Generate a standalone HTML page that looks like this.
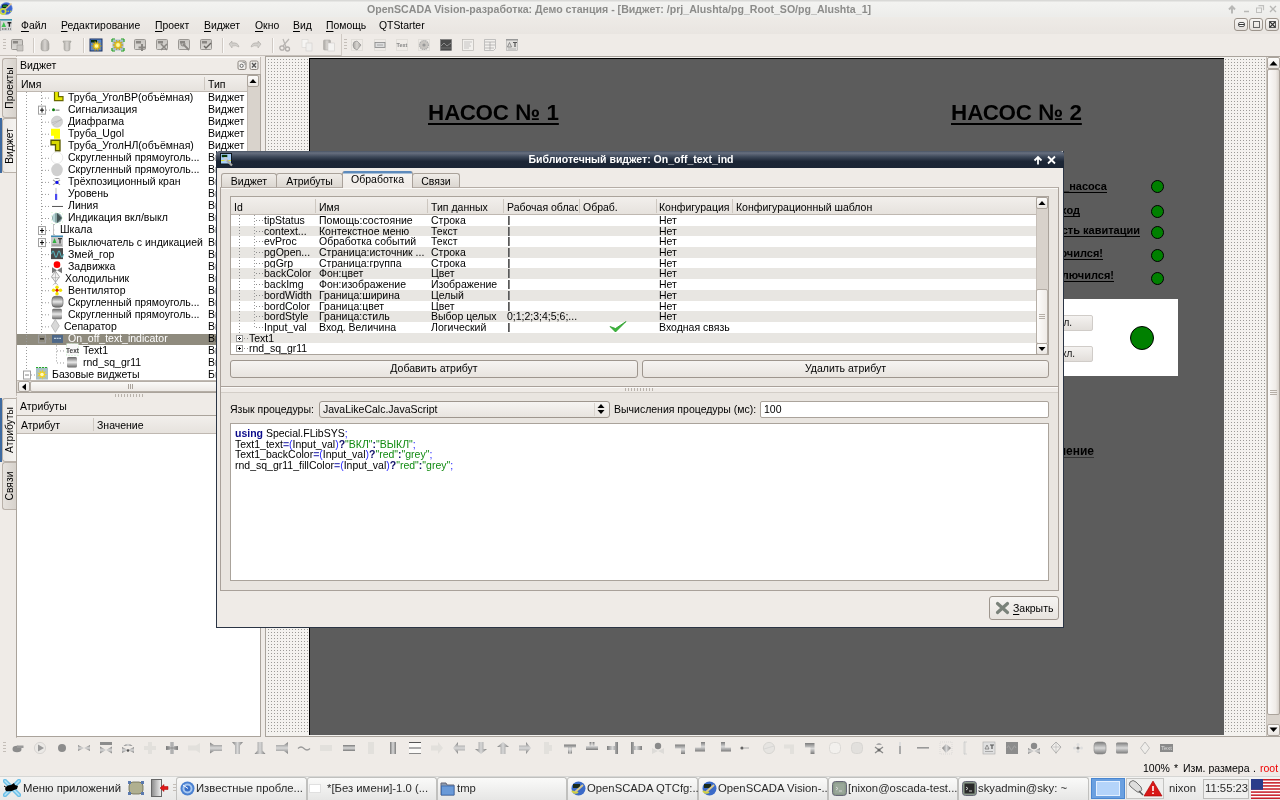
<!DOCTYPE html><html><head><meta charset="utf-8"><style>
html,body{margin:0;padding:0;width:1280px;height:800px;overflow:hidden;background:#efebe7;}
body{position:relative;will-change:transform;font-family:"Liberation Sans",sans-serif;font-size:10.5px;color:#000;}
div{position:absolute;box-sizing:border-box;}
.t{white-space:nowrap;}
.u{text-decoration:underline;text-decoration-skip-ink:none;text-underline-offset:2px;text-decoration-thickness:1px;}
.hdr{background:linear-gradient(#f3f1ee,#e9e5e0);}
.btn{background:linear-gradient(#f6f4f2,#e8e4df);border:1px solid #9e968e;border-radius:3px;}
</style></head><body>
<div style="left:0px;top:0px;width:1280px;height:17px;background:linear-gradient(#d9d9d7 0,#d9d9d7 1px,#f3f3f1 2px,#ededeb 16px);"></div>
<svg style="position:absolute;left:0;top:1px" width="14" height="15"><circle cx="6.3" cy="7.5" r="6" fill="#3a66d0"/><circle cx="6.3" cy="7.5" r="6" fill="none" stroke="#6a8ae0" stroke-width="0.6"/><rect x="2.2" y="3.6" width="5.6" height="3.4" rx="1" fill="#0a1a0a"/><rect x="3" y="4.3" width="4" height="1.8" fill="#1a8a2a"/><path d="M11.5 2.5L5 8.5" stroke="#e0c090" stroke-width="1.5"/><circle cx="3" cy="10.5" r="2.6" fill="none" stroke="#c8d840" stroke-width="1.6"/><path d="M5 10.3h7" stroke="#e0e020" stroke-width="1.1" stroke-dasharray="1.5 1"/></svg>
<div class="t" style="left:0px;top:3px;height:13px;line-height:13px;width:1238px;text-align:center;font-weight:bold;color:#8c8c8a;font-size:10.6px;">OpenSCADA Vision-разработка: Демо станция - [Виджет: /prj_Alushta/pg_Root_SO/pg_Alushta_1]</div>
<svg style="position:absolute;left:1226px;top:3px" width="54" height="12"><path d="M6 10.5V4M3 6.5l3-3 3 3" stroke="#b8b8b6" stroke-width="2" fill="none"/><path d="M18 8.5h5" stroke="#b8b8b6" stroke-width="1.5"/><rect x="30.5" y="5" width="5" height="4.5" stroke="#c0c0be" fill="none"/><path d="M32.5 2.7h5v4.5" stroke="#c0c0be" fill="none" stroke-width="1.2"/><path d="M44 3l6 6M50 3l-6 6" stroke="#b8b8b6" stroke-width="1.3"/></svg>
<div style="left:0px;top:17px;width:1280px;height:17px;background:linear-gradient(#eeebe7,#e9e5e1);"></div>
<svg style="position:absolute;left:0;top:19px" width="12" height="12"><rect x="0" y="0" width="12" height="12" fill="#d8d8d8"/><rect x="0" y="0" width="12" height="1.6" fill="#3a98b0"/><rect x="0" y="1.6" width="1" height="10.4" fill="#aaa"/><path d="M1.5 8L3.8 3 6 8z" fill="#3ec050"/><path d="M7.5 3.8h3.8M9.4 3.8v4" stroke="#222" stroke-width="1.4"/><path d="M2 10h1.5M4.5 10h2M8 10h1M10 10h1" stroke="#333" stroke-width="0.9"/></svg>
<div class="t" style="left:21px;top:19px;height:13px;line-height:13px;font-size:10.4px;"><span class="u">Ф</span>айл</div>
<div class="t" style="left:61px;top:19px;height:13px;line-height:13px;font-size:10.4px;"><span class="u">Р</span>едактирование</div>
<div class="t" style="left:155px;top:19px;height:13px;line-height:13px;font-size:10.4px;"><span class="u">П</span>роект</div>
<div class="t" style="left:204px;top:19px;height:13px;line-height:13px;font-size:10.4px;"><span class="u">В</span>иджет</div>
<div class="t" style="left:255px;top:19px;height:13px;line-height:13px;font-size:10.4px;"><span class="u">О</span>кно</div>
<div class="t" style="left:293px;top:19px;height:13px;line-height:13px;font-size:10.4px;"><span class="u">В</span>ид</div>
<div class="t" style="left:326px;top:19px;height:13px;line-height:13px;font-size:10.4px;"><span class="u">П</span>омощь</div>
<div class="t" style="left:379px;top:19px;height:13px;line-height:13px;font-size:10.4px;">QTStarter</div>
<div style="left:1234px;top:18px;width:14px;height:13px;border:1px solid #9c948c;border-radius:3px;background:linear-gradient(#f8f6f4,#e4e0dc);"></div>
<div style="left:1249px;top:18px;width:14px;height:13px;border:1px solid #9c948c;border-radius:3px;background:linear-gradient(#f8f6f4,#e4e0dc);"></div>
<div style="left:1265px;top:18px;width:14px;height:13px;border:1px solid #9c948c;border-radius:3px;background:linear-gradient(#f8f6f4,#e4e0dc);"></div>
<div style="left:1238px;top:22px;width:7px;height:5px;border:1px solid #555;border-radius:2px;background:#fff;"></div>
<div style="left:1239px;top:24px;width:5px;height:1px;background:#333;"></div>
<div style="left:1253px;top:21px;width:7px;height:7px;border:1px solid #666;"></div>
<div style="left:1269px;top:21px;width:7px;height:7px;border:1px solid #555;"></div>
<svg style="position:absolute;left:1269px;top:21px" width="7" height="7"><path d="M1 1l5 5M6 1l-5 5" stroke="#333" stroke-width="1.2"/></svg>
<div style="left:0px;top:34px;width:1280px;height:22px;background:#efebe7;"></div>
<div style="left:3px;top:39px;width:3px;height:1px;background:#c4beb8;"></div>
<div style="left:3px;top:42px;width:3px;height:1px;background:#c4beb8;"></div>
<div style="left:3px;top:45px;width:3px;height:1px;background:#c4beb8;"></div>
<div style="left:3px;top:48px;width:3px;height:1px;background:#c4beb8;"></div>
<svg style="position:absolute;left:0;top:34px" width="560" height="22"><defs><linearGradient id="tg" x1="0" y1="0" x2="0" y2="1"><stop offset="0" stop-color="#c8c5c1"/><stop offset="1" stop-color="#dcdad6"/></linearGradient><linearGradient id="tgh" x1="0" y1="0" x2="1" y2="0"><stop offset="0" stop-color="#a8a5a1"/><stop offset=".5" stop-color="#d8d5d1"/><stop offset="1" stop-color="#a4a19d"/></linearGradient></defs><g transform="translate(11,5)"><rect x="0.5" y="0.5" width="11" height="10" rx="1" fill="url(#tg)" stroke="#9a9793"/><rect x="2" y="2" width="5" height="2.5" fill="#8a8783"/><path d="M6 6h6v6H6z" fill="#c8c5c1" stroke="#9a9793" stroke-width="0.6"/></g><g transform="translate(39,5)"><path d="M2 5Q2 1 6 0 10 1 10 5v5q0 2-4 2t-4-2z" fill="url(#tgh)" stroke="#aaa7a3" stroke-width="0.6"/></g><g transform="translate(61,5)"><path d="M2 2h8v1l-1 1v6q0 2-3 2t-3-2V4L2 3z" fill="url(#tgh)" stroke="#aaa7a3" stroke-width="0.6"/></g><g transform="translate(90,5)"><rect x="0" y="0" width="12" height="12" fill="#5a8ad0" stroke="#1a3060"/><rect x="1" y="1" width="6" height="2.5" fill="#0a3010"/><polygon points="11.50,7.00 8.97,7.80 10.55,9.94 8.03,9.10 8.05,11.76 6.50,9.60 4.95,11.76 4.97,9.10 2.45,9.94 4.03,7.80 1.50,7.00 4.03,6.20 2.45,4.06 4.97,4.90 4.95,2.24 6.50,4.40 8.05,2.24 8.03,4.90 10.55,4.06 8.97,6.20" fill="#f0d020" stroke="#c09000" stroke-width="0.5"/><circle cx="6.5" cy="7" r="1.82" fill="#fff8a0"/></g><g transform="translate(112,5)"><rect x="0.5" y="0.5" width="11" height="11" fill="#a8c0d0"/><path d="M0 0h3M0 0v3M12 0h-3M12 0v3M0 12h3M0 12v-3M12 12h-3M12 12v-3" stroke="#20a020" stroke-width="1.2"/><polygon points="11.20,6.00 8.57,6.83 10.21,9.06 7.59,8.18 7.61,10.95 6.00,8.70 4.39,10.95 4.41,8.18 1.79,9.06 3.43,6.83 0.80,6.00 3.43,5.17 1.79,2.94 4.41,3.82 4.39,1.05 6.00,3.30 7.61,1.05 7.59,3.82 10.21,2.94 8.57,5.17" fill="#f0d020" stroke="#c09000" stroke-width="0.5"/><circle cx="6" cy="6" r="1.89" fill="#fff8a0"/></g><g transform="translate(134,5)"><rect x="0.5" y="0.5" width="11" height="10" rx="1" fill="url(#tg)" stroke="#9a9793"/><rect x="2" y="2" width="5" height="2.5" fill="#8a8783"/><path d="M8 5v7M4.5 8.5h7" stroke="#8a8783" stroke-width="2"/></g><g transform="translate(156,5)"><rect x="0.5" y="0.5" width="11" height="10" rx="1" fill="url(#tg)" stroke="#9a9793"/><rect x="2" y="2" width="5" height="2.5" fill="#8a8783"/><path d="M5 5l6 6M11 5l-6 6" stroke="#8a8783" stroke-width="1.6"/></g><g transform="translate(178,5)"><rect x="0.5" y="0.5" width="11" height="10" rx="1" fill="url(#tg)" stroke="#9a9793"/><rect x="2" y="2" width="5" height="2.5" fill="#8a8783"/><path d="M5 5l6 6" stroke="#8a8783" stroke-width="1.8"/><circle cx="5" cy="5" r="2" fill="none" stroke="#8a8783"/></g><g transform="translate(200,5)"><rect x="0.5" y="0.5" width="11" height="10" rx="1" fill="url(#tg)" stroke="#9a9793"/><rect x="2" y="2" width="5" height="2.5" fill="#8a8783"/><path d="M4 7l2 2 5-5" stroke="#6a6763" stroke-width="1.4" fill="none"/></g><g transform="translate(228,5)"><path d="M1 5l3-3v2q6-1 7 4-3-2-7-1v2z" fill="url(#tg)" stroke="#a4a19d" stroke-width="0.5"/></g><g transform="translate(250,5)"><path d="M11 5l-3-3v2q-6-1-7 4 3-2 7-1v2z" fill="url(#tg)" stroke="#a4a19d" stroke-width="0.5"/></g><g transform="translate(279,5)"><circle cx="3" cy="9" r="2.2" fill="none" stroke="#b0adaa" stroke-width="1.3"/><circle cx="8.5" cy="10" r="2" fill="none" stroke="#b0adaa" stroke-width="1.3"/><path d="M4 7l6-7M7 8L4 0" stroke="#b8b5b2" stroke-width="1.2"/></g><g transform="translate(301,5)"><rect x="1" y="0.5" width="6" height="8" fill="#f6f5f3" stroke="#d8d6d3" stroke-width="0.6"/><rect x="5" y="4" width="6" height="8" fill="#f0efed" stroke="#d0cecb" stroke-width="0.6"/></g><g transform="translate(323,5)"><rect x="0.5" y="1" width="7" height="10" rx="1" fill="url(#tgh)" stroke="#b0adaa" stroke-width="0.6"/><rect x="5" y="4" width="6.5" height="8" fill="#f4f3f1" stroke="#d0cecb" stroke-width="0.6"/></g><g transform="translate(351,5)"><rect x="0.5" y="0.5" width="11" height="11" fill="none" stroke="#c8c5c1" stroke-dasharray="1 1" stroke-width="0.7"/><path d="M2 6q0-4 4-4l4 4-4 5q-4-1-4-5z" fill="url(#tgh)" stroke="#888" stroke-width="0.6"/></g><g transform="translate(374,5)"><rect x="0.5" y="0.5" width="11" height="11" fill="none" stroke="#c8c5c1" stroke-dasharray="1 1" stroke-width="0.7"/><rect x="1" y="3.5" width="10" height="5" fill="#ddd" stroke="#888" stroke-width="0.8"/><path d="M3 6h6" stroke="#999" stroke-width="0.8"/></g><g transform="translate(396,5)"><rect x="0.5" y="0.5" width="11" height="11" fill="none" stroke="#c8c5c1" stroke-dasharray="1 1" stroke-width="0.7"/><text x="6" y="8" font-size="5.5" text-anchor="middle" fill="#888" font-family="Liberation Sans" font-weight="bold">Text</text></g><g transform="translate(418,5)"><rect x="0.5" y="0.5" width="11" height="11" fill="none" stroke="#c8c5c1" stroke-dasharray="1 1" stroke-width="0.7"/><circle cx="6" cy="6" r="4.5" fill="#c8c5c1" stroke="#aaa" stroke-width="1.2" stroke-dasharray="1.2 0.8"/><circle cx="6" cy="6" r="1.6" fill="#999"/></g><g transform="translate(440,5)"><rect x="0.5" y="0.5" width="11" height="11" fill="#4a4a4a" stroke="#777" stroke-width="0.6"/><path d="M1 7l3-3 3 3 4-3" stroke="#999" fill="none" stroke-width="0.8"/><path d="M1 9h10" stroke="#888" stroke-width="0.6"/></g><g transform="translate(462,5)"><rect x="0.5" y="0.5" width="11" height="11" fill="#f2f0ed" stroke="#b8b5b1" stroke-width="0.7"/><path d="M2 3h8M2 5h6M2 7h7M2 9h5" stroke="#aaa" stroke-width="0.6"/></g><g transform="translate(484,5)"><path d="M0.5 0.5h11v9l-2 2h-9z" fill="#f2f0ed" stroke="#aaa" stroke-width="0.7"/><path d="M1 3h10M1 6h10M1 9h9M6 3v8" stroke="#999" stroke-width="0.6"/></g><g transform="translate(506,5)"><rect x="0.5" y="0.5" width="11" height="11" fill="#e2e0dd" stroke="#aaa" stroke-width="0.6"/><rect x="0" y="0" width="12" height="1.5" fill="#999"/><path d="M1.5 8L3.5 3.5 5.5 8z" fill="none" stroke="#777" stroke-width="0.8"/><path d="M7 3.5h4M9 3.5v4.5" stroke="#555" stroke-width="1.2"/><path d="M2 10h8" stroke="#aaa" stroke-width="0.8"/></g></svg>
<div style="left:33px;top:38px;width:1px;height:15px;background:#d0cac4;"></div>
<div style="left:34px;top:38px;width:1px;height:15px;background:#fbfaf9;"></div>
<div style="left:83px;top:38px;width:1px;height:15px;background:#d0cac4;"></div>
<div style="left:84px;top:38px;width:1px;height:15px;background:#fbfaf9;"></div>
<div style="left:222px;top:38px;width:1px;height:15px;background:#d0cac4;"></div>
<div style="left:223px;top:38px;width:1px;height:15px;background:#fbfaf9;"></div>
<div style="left:272px;top:38px;width:1px;height:15px;background:#d0cac4;"></div>
<div style="left:273px;top:38px;width:1px;height:15px;background:#fbfaf9;"></div>
<div style="left:341px;top:34px;width:1px;height:22px;background:#d0cac4;"></div>
<div style="left:0px;top:55px;width:341px;height:1px;background:#c6c0ba;"></div>
<div style="left:344px;top:39px;width:3px;height:1px;background:#c4beb8;"></div>
<div style="left:344px;top:42px;width:3px;height:1px;background:#c4beb8;"></div>
<div style="left:344px;top:45px;width:3px;height:1px;background:#c4beb8;"></div>
<div style="left:344px;top:48px;width:3px;height:1px;background:#c4beb8;"></div>
<div style="left:2px;top:58px;width:15px;height:60px;background:linear-gradient(90deg,#e6e2dd,#d6d1cb);border:1px solid #b9b1a9;border-right:none;border-radius:3px 0 0 3px;"></div>
<div class="t" style="left:3px;top:58px;width:13px;height:60px;"><div class="t" style="left:50%;top:50%;transform:translate(-50%,-50%) rotate(-90deg);font-size:10.3px;line-height:12px;">Проекты</div></div>
<div style="left:2px;top:118px;width:15px;height:55px;background:linear-gradient(90deg,#ece9e5,#f6f4f1);border:1px solid #b9b1a9;border-right:none;border-radius:3px 0 0 3px;"></div>
<div style="left:0px;top:118px;width:2px;height:55px;background:#3e6aa0;"></div>
<div class="t" style="left:3px;top:118px;width:13px;height:55px;"><div class="t" style="left:50%;top:50%;transform:translate(-50%,-50%) rotate(-90deg);font-size:10.3px;line-height:12px;">Виджет</div></div>
<div style="left:2px;top:398px;width:15px;height:64px;background:linear-gradient(90deg,#ece9e5,#f6f4f1);border:1px solid #b9b1a9;border-right:none;border-radius:3px 0 0 3px;"></div>
<div style="left:0px;top:398px;width:2px;height:64px;background:#3e6aa0;"></div>
<div class="t" style="left:3px;top:398px;width:13px;height:64px;"><div class="t" style="left:50%;top:50%;transform:translate(-50%,-50%) rotate(-90deg);font-size:10.3px;line-height:12px;">Атрибуты</div></div>
<div style="left:2px;top:462px;width:15px;height:48px;background:linear-gradient(90deg,#e6e2dd,#d6d1cb);border:1px solid #b9b1a9;border-right:none;border-radius:3px 0 0 3px;"></div>
<div class="t" style="left:3px;top:462px;width:13px;height:48px;"><div class="t" style="left:50%;top:50%;transform:translate(-50%,-50%) rotate(-90deg);font-size:10.3px;line-height:12px;">Связи</div></div>
<div style="left:16px;top:56px;width:1px;height:340px;background:#c4bdb6;"></div>
<div style="left:16px;top:397px;width:1px;height:341px;background:#c4bdb6;"></div>
<div class="t" style="left:20px;top:59px;height:13px;line-height:13px;">Виджет</div>
<svg style="position:absolute;left:237px;top:60px" width="23" height="11"><rect x="1" y="1" width="8" height="8.5" rx="1.5" fill="#f0eeeb" stroke="#8a847e"/><circle cx="4.6" cy="5.8" r="1.6" fill="#fff" stroke="#666" stroke-width="1"/><path d="M5.5 2.5h2.5v2.5" stroke="#888" fill="none" stroke-width="0.8"/><rect x="13" y="1" width="8" height="8.5" rx="1.5" fill="#f0eeeb" stroke="#8a847e"/><path d="M15 3l4 4.5M19 3l-4 4.5" stroke="#555" stroke-width="1.3"/></svg>
<div style="left:16px;top:57px;width:245px;height:1px;background:#fbfaf9;"></div>
<div style="left:260px;top:57px;width:1px;height:337px;background:#c4bdb6;"></div>
<div style="left:16px;top:74px;width:245px;height:319px;background:#fff;border:1px solid #aaa39b;"></div>
<div style="left:17px;top:75px;width:230px;height:17px;background:linear-gradient(#f2efec,#e6e2dd);border-bottom:1px solid #bfb8b1;"></div>
<div style="left:204px;top:77px;width:1px;height:13px;background:#cdc7c0;"></div>
<div class="t" style="left:21px;top:78px;height:12px;line-height:12px;">Имя</div>
<div class="t" style="left:208px;top:78px;height:12px;line-height:12px;">Тип</div>
<div style="left:247px;top:75px;width:13px;height:306px;background:#d9d3cc;border-left:1px solid #c0b9b2;"></div>
<div style="left:247px;top:75px;width:12px;height:12px;background:linear-gradient(#fdfcfb,#eae6e2);border:1px solid #aaa39b;border-radius:2px;"></div>
<svg style="position:absolute;left:249px;top:78px" width="8" height="6"><path d="M0.5 5L4 1l3.5 4z" fill="#000"/></svg>
<div style="left:17px;top:380px;width:230px;height:12px;background:#e0dbd5;border-top:1px solid #c0b9b2;"></div>
<div style="left:18px;top:381px;width:12px;height:11px;background:linear-gradient(#fdfcfb,#eae6e2);border:1px solid #aaa39b;border-radius:2px;"></div>
<svg style="position:absolute;left:21px;top:383px" width="6" height="8"><path d="M5 0.5L1 4l4 3.5z" fill="#000"/></svg>
<div style="left:30px;top:381px;width:217px;height:11px;background:linear-gradient(#fbfaf8,#ece8e4);border:1px solid #b5aea6;border-radius:2px;"></div>
<div style="left:128px;top:384px;width:1px;height:5px;background:#aaa39b;"></div>
<div style="left:130px;top:384px;width:1px;height:5px;background:#aaa39b;"></div>
<div style="left:132px;top:384px;width:1px;height:5px;background:#aaa39b;"></div>
<div style="left:115px;top:394px;width:1px;height:3px;background:#b8b2ab;"></div>
<div style="left:118px;top:394px;width:1px;height:3px;background:#b8b2ab;"></div>
<div style="left:121px;top:394px;width:1px;height:3px;background:#b8b2ab;"></div>
<div style="left:124px;top:394px;width:1px;height:3px;background:#b8b2ab;"></div>
<div style="left:127px;top:394px;width:1px;height:3px;background:#b8b2ab;"></div>
<div style="left:130px;top:394px;width:1px;height:3px;background:#b8b2ab;"></div>
<div style="left:133px;top:394px;width:1px;height:3px;background:#b8b2ab;"></div>
<div style="left:136px;top:394px;width:1px;height:3px;background:#b8b2ab;"></div>
<div style="left:139px;top:394px;width:1px;height:3px;background:#b8b2ab;"></div>
<div style="left:142px;top:394px;width:1px;height:3px;background:#b8b2ab;"></div>
<div style="left:17px;top:334px;width:230px;height:11px;background:#8f8b7e;"></div>
<svg style="position:absolute;left:17px;top:92px;overflow:hidden" width="230" height="288"><defs><linearGradient id="trg" x1="0" y1="0" x2="0" y2="1"><stop offset="0" stop-color="#666"/><stop offset=".5" stop-color="#e8e8e8"/><stop offset="1" stop-color="#666"/></linearGradient><radialGradient id="trr"><stop offset="0" stop-color="#e0e0e0"/><stop offset="1" stop-color="#5a5a5a"/></radialGradient></defs><path d="M9.5 0V277.52" stroke="#9a9a9a" stroke-width="1" stroke-dasharray="1 2"/><path d="M24.5 0V242.39999999999998" stroke="#9a9a9a" stroke-width="1" stroke-dasharray="1 2"/><path d="M39.5 250.39999999999998V270.98" stroke="#9a9a9a" stroke-width="1" stroke-dasharray="1 2"/><path d="M25 6.099999999999994H33" stroke="#9a9a9a" stroke-width="1" stroke-dasharray="1 2"/><path d="M37.5 -2.4000000000000057h4v7h4.5v4h-8.5z" fill="#e8e800" stroke="#6a6a00" stroke-width="1.2"/><rect x="21.5" y="14.139999999999986" width="7" height="8" fill="#fff" stroke="#a0a0a0"/><path d="M23 18.139999999999986h4" stroke="#000"/><path d="M25 15.639999999999986v5" stroke="#000"/><path d="M29 18.139999999999986H33" stroke="#9a9a9a" stroke-width="1" stroke-dasharray="1 2"/><circle cx="36.5" cy="17.639999999999986" r="1.5" fill="#108010"/><path d="M38.5 18.139999999999986h4" stroke="#777"/><path d="M25 30.179999999999993H33" stroke="#9a9a9a" stroke-width="1" stroke-dasharray="1 2"/><circle cx="40" cy="29.679999999999993" r="5.6" fill="#d4d4d4" stroke="#c4c4c4" stroke-width="0.6"/><path d="M35 30.679999999999993l10-3M36 32.67999999999999l8-5" stroke="#aaa" stroke-width="0.5"/><path d="M25 42.22H33" stroke="#9a9a9a" stroke-width="1" stroke-dasharray="1 2"/><path d="M34 36.72h9v10h-6v-3h-3z" fill="#ffff00"/><path d="M25 54.25999999999999H33" stroke="#9a9a9a" stroke-width="1" stroke-dasharray="1 2"/><path d="M34 48.25999999999999h9v10.5h-4.5v-6h-4.5z" fill="#d8d800" stroke="#5a5a00" stroke-width="1.3"/><path d="M25 66.29999999999998H33" stroke="#9a9a9a" stroke-width="1" stroke-dasharray="1 2"/><ellipse cx="40" cy="65.79999999999998" rx="5.8" ry="5.8" fill="#fff" stroke="#d8d8d8" stroke-width="0.6"/><path d="M25 78.33999999999997H33" stroke="#9a9a9a" stroke-width="1" stroke-dasharray="1 2"/><ellipse cx="40" cy="77.83999999999997" rx="5.8" ry="6.3" fill="#d0d0d0"/><path d="M25 90.38H33" stroke="#9a9a9a" stroke-width="1" stroke-dasharray="1 2"/><path d="M37 86.88q3-2 6 0z" fill="#999"/><path d="M36 87.88l7 5M43 87.88l-7 5" stroke="#999" stroke-width="1.2"/><circle cx="40" cy="90.38" r="1.6" fill="#1010f0"/><path d="M25 102.41999999999999H33" stroke="#9a9a9a" stroke-width="1" stroke-dasharray="1 2"/><rect x="38" y="95.91999999999999" width="2" height="12" fill="#ddd"/><rect x="38" y="101.91999999999999" width="2.2" height="6" fill="#4a4af0"/><path d="M25 114.45999999999998H33" stroke="#9a9a9a" stroke-width="1" stroke-dasharray="1 2"/><path d="M35 114.45999999999998h11" stroke="#555"/><path d="M25 126.5H33" stroke="#9a9a9a" stroke-width="1" stroke-dasharray="1 2"/><rect x="34.5" y="120.5" width="11" height="11" fill="none" stroke="#9e9" stroke-width="0.5" stroke-dasharray="1 3"/><circle cx="40" cy="126.0" r="5" fill="#8aa8a8"/><path d="M40 121.0l5 5-5 5z" fill="#455"/><path d="M37 122.0v8" stroke="#cee" stroke-width="1.3"/><rect x="21.5" y="134.54" width="7" height="8" fill="#fff" stroke="#a0a0a0"/><path d="M23 138.54h4" stroke="#000"/><path d="M25 136.04v5" stroke="#000"/><path d="M29 138.54H33" stroke="#9a9a9a" stroke-width="1" stroke-dasharray="1 2"/><path d="M36.5 132.04v11M36.5 132.54h1.5M36.5 142.54h1.5M36.5 138.04h1" stroke="#aaa" stroke-width="0.7"/><rect x="21.5" y="146.57999999999998" width="7" height="8" fill="#fff" stroke="#a0a0a0"/><path d="M23 150.57999999999998h4" stroke="#000"/><path d="M25 148.07999999999998v5" stroke="#000"/><path d="M29 150.57999999999998H33" stroke="#9a9a9a" stroke-width="1" stroke-dasharray="1 2"/><rect x="34" y="143.57999999999998" width="12" height="11.5" fill="#c8c8c8"/><rect x="34" y="143.57999999999998" width="12" height="1.3" fill="#2a80b0"/><path d="M35.5 151.07999999999998l2-5 2 5z" fill="#30b040"/><path d="M41 146.57999999999998h4M43 146.57999999999998v5" stroke="#333" stroke-width="1.2"/><path d="M35 153.07999999999998h10" stroke="#777" stroke-width="0.8"/><path d="M25 162.62H33" stroke="#9a9a9a" stroke-width="1" stroke-dasharray="1 2"/><rect x="34" y="156.12" width="12" height="11" fill="#4a4a4a"/><path d="M34.5 162.12q1.5-6 3 0t3 0 3 0 3 0" stroke="#5ab0b8" stroke-width="1.1" fill="none"/><path d="M25 174.65999999999997H33" stroke="#9a9a9a" stroke-width="1" stroke-dasharray="1 2"/><path d="M35 175.15999999999997l5 3-5 3zM45 175.15999999999997l-5 3 5 3z" fill="#777"/><circle cx="40" cy="172.65999999999997" r="3.3" fill="#f00"/><path d="M25 186.7H33" stroke="#9a9a9a" stroke-width="1" stroke-dasharray="1 2"/><path d="M38.5 179.2l4 5.5-4 5.5-4-5.5z" fill="#f2f2f2" stroke="#888" stroke-width="0.7"/><path d="M38.5 179.2v13M34.5 185.7h8" stroke="#999" stroke-width="0.5"/><path d="M36 193.2l2.5-2.5 2.5 2.5" stroke="#888" fill="none" stroke-width="0.6"/><path d="M25 198.74H33" stroke="#9a9a9a" stroke-width="1" stroke-dasharray="1 2"/><circle cx="40" cy="195.24" r="1.7" fill="#f0e000"/><circle cx="40" cy="201.74" r="1.7" fill="#f0e000"/><circle cx="36.5" cy="198.24" r="1.7" fill="#f0e000"/><circle cx="43.5" cy="198.24" r="1.7" fill="#f0e000"/><path d="M36 198.24h8M40 195.24v7" stroke="#f0e000" stroke-width="1.5"/><circle cx="40" cy="198.24" r="1.5" fill="#e01010"/><path d="M25 210.77999999999997H33" stroke="#9a9a9a" stroke-width="1" stroke-dasharray="1 2"/><rect x="35" y="204.27999999999997" width="11" height="11" rx="3.5" fill="url(#trg)" stroke="#555" stroke-width="0.6"/><path d="M25 222.81999999999994H33" stroke="#9a9a9a" stroke-width="1" stroke-dasharray="1 2"/><rect x="35" y="216.81999999999994" width="10" height="10.5" rx="1.5" fill="url(#trg)"/><path d="M25 234.86H33" stroke="#9a9a9a" stroke-width="1" stroke-dasharray="1 2"/><path d="M38.3 227.36l4 6.5-4 6.5-4-6.5z" fill="#d8d8d8" stroke="#aaa" stroke-width="0.7"/><rect x="21.5" y="242.89999999999998" width="7" height="8" fill="none" stroke="#a0a0a0"/><path d="M23 246.89999999999998h4" stroke="#000"/><path d="M29 246.89999999999998H33" stroke="#9a9a9a" stroke-width="1" stroke-dasharray="1 2"/><rect x="35" y="242.89999999999998" width="11" height="8" fill="#4e6888"/><path d="M37 246.39999999999998h7" stroke="#bcd" stroke-width="1.2" stroke-dasharray="2 0.6"/><path d="M40 258.93999999999994H47" stroke="#9a9a9a" stroke-width="1" stroke-dasharray="1 2"/><rect x="49.5" y="251.43999999999994" width="12" height="12" fill="#f8f8f8" stroke="#8d8" stroke-width="0.5" stroke-dasharray="1 2"/><text x="55.5" y="260.93999999999994" font-size="6.5" text-anchor="middle" fill="#444" font-family="Liberation Sans" font-weight="bold">Text</text><path d="M40 270.98H47" stroke="#9a9a9a" stroke-width="1" stroke-dasharray="1 2"/><rect x="50" y="264.98" width="10" height="10.5" rx="1.5" fill="url(#trg)"/><rect x="6.5" y="279.02" width="7" height="8" fill="#fff" stroke="#a0a0a0"/><path d="M8 283.02h4" stroke="#888"/><path d="M14 283.02H18" stroke="#9a9a9a" stroke-width="1" stroke-dasharray="1 2"/><rect x="19" y="275.52" width="12" height="12" fill="#a8c0c8"/><path d="M19 275.52h12" stroke="#2a2" stroke-dasharray="2 1"/><polygon points="30.30,282.52 27.44,283.41 29.06,285.93 26.30,284.77 25.92,287.74 24.55,285.08 22.35,287.11 23.01,284.19 20.02,284.33 22.40,282.52 20.02,280.71 23.01,280.85 22.35,277.93 24.55,279.96 25.92,277.30 26.30,280.27 29.06,279.11 27.44,281.63" fill="#f0d020"/><circle cx="25" cy="282.52" r="1.8" fill="#fffac0"/></svg>
<div class="t" style="left:68px;top:91px;height:13px;line-height:13px;color:#000;">Труба_УголВР(объёмная)</div>
<div class="t" style="left:208px;top:91px;height:13px;line-height:13px;">Виджет</div>
<div class="t" style="left:68px;top:103px;height:13px;line-height:13px;color:#000;">Сигнализация</div>
<div class="t" style="left:208px;top:103px;height:13px;line-height:13px;">Виджет</div>
<div class="t" style="left:68px;top:115px;height:13px;line-height:13px;color:#000;">Диафрагма</div>
<div class="t" style="left:208px;top:115px;height:13px;line-height:13px;">Виджет</div>
<div class="t" style="left:68px;top:127px;height:13px;line-height:13px;color:#000;">Труба_Ugol</div>
<div class="t" style="left:208px;top:127px;height:13px;line-height:13px;">Виджет</div>
<div class="t" style="left:68px;top:139px;height:13px;line-height:13px;color:#000;">Труба_УголНЛ(объёмная)</div>
<div class="t" style="left:208px;top:139px;height:13px;line-height:13px;">Виджет</div>
<div class="t" style="left:68px;top:151px;height:13px;line-height:13px;color:#000;">Скругленный прямоуголь...</div>
<div class="t" style="left:208px;top:151px;height:13px;line-height:13px;">Виджет</div>
<div class="t" style="left:68px;top:163px;height:13px;line-height:13px;color:#000;">Скругленный прямоуголь...</div>
<div class="t" style="left:208px;top:163px;height:13px;line-height:13px;">Виджет</div>
<div class="t" style="left:68px;top:175px;height:13px;line-height:13px;color:#000;">Трёхпозиционный кран</div>
<div class="t" style="left:208px;top:175px;height:13px;line-height:13px;">Виджет</div>
<div class="t" style="left:68px;top:187px;height:13px;line-height:13px;color:#000;">Уровень</div>
<div class="t" style="left:208px;top:187px;height:13px;line-height:13px;">Виджет</div>
<div class="t" style="left:68px;top:199px;height:13px;line-height:13px;color:#000;">Линия</div>
<div class="t" style="left:208px;top:199px;height:13px;line-height:13px;">Виджет</div>
<div class="t" style="left:68px;top:211px;height:13px;line-height:13px;color:#000;">Индикация вкл/выкл</div>
<div class="t" style="left:208px;top:211px;height:13px;line-height:13px;">Виджет</div>
<div class="t" style="left:60px;top:223px;height:13px;line-height:13px;color:#000;">Шкала</div>
<div class="t" style="left:208px;top:223px;height:13px;line-height:13px;">Виджет</div>
<div class="t" style="left:68px;top:236px;height:13px;line-height:13px;color:#000;">Выключатель с индикацией</div>
<div class="t" style="left:208px;top:236px;height:13px;line-height:13px;">Виджет</div>
<div class="t" style="left:68px;top:248px;height:13px;line-height:13px;color:#000;">Змей_гор</div>
<div class="t" style="left:208px;top:248px;height:13px;line-height:13px;">Виджет</div>
<div class="t" style="left:68px;top:260px;height:13px;line-height:13px;color:#000;">Задвижка</div>
<div class="t" style="left:208px;top:260px;height:13px;line-height:13px;">Виджет</div>
<div class="t" style="left:65px;top:272px;height:13px;line-height:13px;color:#000;">Холодильник</div>
<div class="t" style="left:208px;top:272px;height:13px;line-height:13px;">Виджет</div>
<div class="t" style="left:68px;top:284px;height:13px;line-height:13px;color:#000;">Вентилятор</div>
<div class="t" style="left:208px;top:284px;height:13px;line-height:13px;">Виджет</div>
<div class="t" style="left:68px;top:296px;height:13px;line-height:13px;color:#000;">Скругленный прямоуголь...</div>
<div class="t" style="left:208px;top:296px;height:13px;line-height:13px;">Виджет</div>
<div class="t" style="left:68px;top:308px;height:13px;line-height:13px;color:#000;">Скругленный прямоуголь...</div>
<div class="t" style="left:208px;top:308px;height:13px;line-height:13px;">Виджет</div>
<div class="t" style="left:64px;top:320px;height:13px;line-height:13px;color:#000;">Сепаратор</div>
<div class="t" style="left:208px;top:320px;height:13px;line-height:13px;">Виджет</div>
<div class="t" style="left:68px;top:332px;height:13px;line-height:13px;color:#fff;">On_off_text_indicator</div>
<div class="t" style="left:208px;top:332px;height:13px;line-height:13px;">Виджет</div>
<div class="t" style="left:83px;top:344px;height:13px;line-height:13px;color:#000;">Text1</div>
<div class="t" style="left:208px;top:344px;height:13px;line-height:13px;">Виджет</div>
<div class="t" style="left:83px;top:356px;height:13px;line-height:13px;color:#000;">rnd_sq_gr11</div>
<div class="t" style="left:208px;top:356px;height:13px;line-height:13px;">Виджет</div>
<div class="t" style="left:52px;top:368px;height:13px;line-height:13px;color:#000;">Базовые виджеты</div>
<div class="t" style="left:208px;top:368px;height:13px;line-height:13px;">Библиотека</div>
<div class="t" style="left:20px;top:400px;height:13px;line-height:13px;">Атрибуты</div>
<div style="left:16px;top:415px;width:245px;height:322px;background:#fff;border:1px solid #aaa39b;"></div>
<div style="left:17px;top:416px;width:243px;height:18px;background:linear-gradient(#f2efec,#e6e2dd);border-bottom:1px solid #bfb8b1;"></div>
<div style="left:93px;top:418px;width:1px;height:13px;background:#cdc7c0;"></div>
<div class="t" style="left:21px;top:419px;height:12px;line-height:12px;">Атрибут</div>
<div class="t" style="left:97px;top:419px;height:12px;line-height:12px;">Значение</div>
<div style="left:261px;top:56px;width:5px;height:682px;background:#efebe7;"></div>
<div style="left:265px;top:56px;width:1015px;height:681px;background:#f4f2ef;border:1px solid #a9a39c;border-right:none;"></div>
<svg style="position:absolute;left:266px;top:57px" width="1001" height="677"><defs><pattern id="dots" width="3" height="3" patternUnits="userSpaceOnUse" x="2" y="2"><rect width="3" height="3" fill="#f4f2ef"/><rect x="0" y="0" width="1" height="1" fill="#9c9a97"/></pattern></defs><rect width="1001" height="677" fill="url(#dots)"/></svg>
<div style="left:309px;top:58px;width:915px;height:677px;background:#5c5c5c;border-top:1px solid #000;border-left:1px solid #000;"></div>
<div class="t" style="left:428px;top:100px;height:26px;line-height:26px;font-weight:bold;font-size:22.4px;text-decoration:underline;text-decoration-skip-ink:none;text-decoration-thickness:2px;text-underline-offset:3px;">НАСОС № 1</div>
<div class="t" style="left:951px;top:100px;height:26px;line-height:26px;font-weight:bold;font-size:22.4px;text-decoration:underline;text-decoration-skip-ink:none;text-decoration-thickness:2px;text-underline-offset:3px;">НАСОС № 2</div>
<div class="t u" style="left:807px;width:300px;text-align:right;top:179px;height:14px;line-height:14px;font-weight:bold;font-size:11px;color:#000;">Состояние_насоса</div>
<div class="t u" style="left:780px;width:300px;text-align:right;top:202.5px;height:14px;line-height:14px;font-weight:bold;font-size:11px;color:#000;">Расход</div>
<div class="t u" style="left:840px;width:300px;text-align:right;top:223px;height:14px;line-height:14px;font-weight:bold;font-size:11px;color:#000;">Вероятность кавитации</div>
<div class="t u" style="left:803px;width:300px;text-align:right;top:245.5px;height:14px;line-height:14px;font-weight:bold;font-size:11px;color:#000;">Включился!</div>
<div class="t u" style="left:814px;width:300px;text-align:right;top:267.5px;height:14px;line-height:14px;font-weight:bold;font-size:11px;color:#000;">Отключился!</div>
<div style="left:1151px;top:180px;width:13px;height:13px;background:#008000;border:1px solid #000;border-radius:50%;"></div>
<div style="left:1151px;top:205px;width:13px;height:13px;background:#008000;border:1px solid #000;border-radius:50%;"></div>
<div style="left:1151px;top:226px;width:13px;height:13px;background:#008000;border:1px solid #000;border-radius:50%;"></div>
<div style="left:1151px;top:249px;width:13px;height:13px;background:#008000;border:1px solid #000;border-radius:50%;"></div>
<div style="left:1151px;top:272px;width:13px;height:13px;background:#008000;border:1px solid #000;border-radius:50%;"></div>
<div style="left:1000px;top:299px;width:178px;height:77px;background:#fff;"></div>
<div style="left:1000px;top:315px;width:93px;height:16px;background:linear-gradient(#f4f2f0,#e2deda);border:1px solid #d0ccc8;border-radius:2px;"></div>
<div style="left:1000px;top:346px;width:93px;height:16px;background:linear-gradient(#f4f2f0,#e2deda);border:1px solid #d0ccc8;border-radius:2px;"></div>
<div class="t" style="left:972px;width:100px;text-align:right;top:317px;height:12px;line-height:12px;font-size:10px;color:#111;">Вкл.</div>
<div class="t" style="left:975px;width:100px;text-align:right;top:348px;height:12px;line-height:12px;font-size:10px;color:#111;">Откл.</div>
<div style="left:1130px;top:326px;width:24px;height:24px;background:#008000;border:1px solid #000;border-radius:50%;"></div>
<div class="t" style="left:994px;width:100px;text-align:right;top:444px;height:15px;line-height:15px;font-weight:bold;font-size:12px;color:#000;text-decoration:underline;text-decoration-color:#333;text-underline-offset:2px;">Управление</div>
<div style="left:1266px;top:57px;width:14px;height:679px;background:#efebe7;border-left:1px solid #c9c3bc;"></div>
<div style="left:1267px;top:57px;width:13px;height:12px;background:linear-gradient(#fdfcfb,#eae6e2);border:1px solid #aaa39b;border-radius:2px;"></div>
<svg style="position:absolute;left:1269px;top:60px" width="9" height="6"><path d="M0.5 5.5L4.5 1l4 4.5z" fill="#000"/></svg>
<div style="left:1267px;top:69px;width:13px;height:656px;background:#d9d3cc;"></div>
<div style="left:1267px;top:69px;width:13px;height:646px;background:linear-gradient(90deg,#fbfaf9,#f0ece8 70%,#d8d2cb);border:1px solid #aaa39b;border-radius:2px;"></div>
<div style="left:1270px;top:390px;width:7px;height:1px;background:#b5aea6;"></div>
<div style="left:1270px;top:392px;width:7px;height:1px;background:#b5aea6;"></div>
<div style="left:1270px;top:394px;width:7px;height:1px;background:#b5aea6;"></div>
<div style="left:1267px;top:724px;width:13px;height:12px;background:linear-gradient(#fdfcfb,#eae6e2);border:1px solid #aaa39b;border-radius:2px;"></div>
<svg style="position:absolute;left:1269px;top:727px" width="9" height="6"><path d="M0.5 0.5L4.5 5l4-4.5z" fill="#000"/></svg>
<div style="left:0px;top:738px;width:1280px;height:38px;background:#efebe7;"></div>
<div style="left:3px;top:742px;width:3px;height:1px;background:#c4beb8;"></div>
<div style="left:3px;top:745px;width:3px;height:1px;background:#c4beb8;"></div>
<div style="left:3px;top:748px;width:3px;height:1px;background:#c4beb8;"></div>
<div style="left:3px;top:751px;width:3px;height:1px;background:#c4beb8;"></div>
<svg style="position:absolute;left:0;top:738px" width="1280" height="20"><defs><linearGradient id="gg" x1="0" y1="0" x2="0" y2="1"><stop offset="0" stop-color="#7c7c7c"/><stop offset=".5" stop-color="#d8d8d8"/><stop offset="1" stop-color="#7c7c7c"/></linearGradient><linearGradient id="ggv" x1="0" y1="0" x2="1" y2="0"><stop offset="0" stop-color="#7c7c7c"/><stop offset=".5" stop-color="#d8d8d8"/><stop offset="1" stop-color="#7c7c7c"/></linearGradient></defs><g transform="translate(12,4)"><ellipse cx="5" cy="7" rx="4.5" ry="3.3" fill="#8c8c8c"/><rect x="5" y="3.5" width="6.5" height="2.5" fill="#9a9a9a"/></g><g transform="translate(34,4)"><circle cx="6" cy="6" r="5.6" fill="#ebe9e6" stroke="#d0cecb" stroke-width="0.8"/><path d="M4 2.5L10 6 4 9.5z" fill="#999"/></g><g transform="translate(56,4)"><circle cx="6" cy="6" r="4" fill="#8c8c8c"/></g><g transform="translate(78,4)"><path d="M0 3L6 6 0 9zM12 3L6 6 12 9z" fill="url(#gg)"/></g><g transform="translate(100,4)"><rect x="0" y="0" width="12" height="3" fill="#8c8c8c"/><path d="M0 4.5L6 8 0 11.5zM12 4.5L6 8 12 11.5z" fill="url(#gg)"/></g><g transform="translate(122,4)"><path d="M1.5 4Q6 -0.5 10.5 4z" fill="url(#ggv)"/><path d="M0 5L6 8 0 11zM12 5L6 8 12 11z" fill="url(#gg)"/><circle cx="6" cy="8.5" r="1.3" fill="#555"/></g><g transform="translate(144,4)"><path d="M4 0h4v4h4v4h-4v4h-4v-4h-4v-4h4z" fill="#e2e0dc"/></g><g transform="translate(166,4)"><path d="M4 0h4v4h4v4h-4v4h-4v-4h-4v-4h4z" fill="url(#ggv)"/><path d="M0 6h12M6 0v12" stroke="#777" stroke-width="0.7"/></g><g transform="translate(188,4)"><path d="M0 3.5h8l4-2.5v10l-4-2.5h-8z" fill="#e2e0dc"/></g><g transform="translate(210,4)"><path d="M0 0.5l4 2.5h8v6h-8l-4 2.5z" fill="url(#gg)"/></g><g transform="translate(232,4)"><path d="M0 0h11l-3 3.5v8.5h-5v-8.5z" fill="url(#ggv)"/></g><g transform="translate(254,4)"><path d="M3.5 0h5v8.5l3 3.5h-11l3-3.5z" fill="url(#ggv)"/></g><g transform="translate(276,4)"><path d="M0 3h8l4-3v12l-4-3h-8z" fill="url(#gg)"/></g><g transform="translate(298,4)"><path d="M0 6.5q3-3 6 0t6 0" stroke="#999" stroke-width="1.2" fill="none"/></g><g transform="translate(320,4)"><rect x="0" y="3" width="12" height="6" fill="#e2e0dc"/></g><g transform="translate(343,4)"><rect x="0" y="3" width="12" height="6" fill="url(#gg)"/></g><g transform="translate(365,4)"><rect x="3" y="0" width="6" height="12" fill="#e2e0dc"/></g><g transform="translate(387,4)"><rect x="3" y="0" width="6" height="12" fill="url(#ggv)"/></g><g transform="translate(409,4)"><rect x="0" y="0" width="12" height="12" fill="#fbfaf8"/><rect x="0" y="0" width="12" height="1" fill="#555"/><rect x="0" y="5" width="12" height="2" fill="#aaa"/><rect x="0" y="11" width="12" height="1" fill="#888"/></g><g transform="translate(431,4)"><path d="M0 3.5h7v-3.5l5 6-5 6v-3.5h-7z" fill="#e2e0dc"/></g><g transform="translate(453,4)"><path d="M12 3.5h-7v-3.5l-5 6 5 6v-3.5h7z" fill="url(#gg)"/></g><g transform="translate(475,4)"><path d="M3.5 0v7h-3.5l6 5 6-5h-3.5v-7z" fill="url(#ggv)"/></g><g transform="translate(497,4)"><path d="M3.5 12v-7h-3.5l6-5 6 5h-3.5v7z" fill="url(#ggv)"/></g><g transform="translate(519,4)"><path d="M0 3.5h7v-3.5l5 6-5 6v-3.5h-7z" fill="url(#gg)"/></g><g transform="translate(543,4)"><path d="M1 0h5v3h3v6h-3v3h-5z" fill="#e2e0dc"/></g><g transform="translate(564,4)"><path d="M0 2.5h12v3h-4v6h-4v-6h-4z" fill="url(#gg)"/><path d="M6 5.5v6" stroke="#eee" stroke-width="0.8"/></g><g transform="translate(586,4)"><path d="M3.5 0h2v4h1v-4h2v4h3.5v4h-12v-4h3.5z" fill="url(#gg)"/></g><g transform="translate(607,4)"><path d="M8 0h3v12h-3v-4h-8v-4h8z" fill="url(#ggv)"/></g><g transform="translate(630,4)"><path d="M1 0h3v4h8v4h-8v4h-3z" fill="url(#ggv)"/></g><g transform="translate(652,4)"><path d="M0 6l6 3 6-3v6l-6-3-6 3z" fill="#dddbd8"/><circle cx="6" cy="4" r="3.2" fill="#8a8a8a"/></g><g transform="translate(675,4)"><path d="M0 2.5h10v9.5h-4v-5.5h-6z" fill="url(#gg)"/></g><g transform="translate(695,4)"><path d="M6 0h4v9.5h-10v-4h6z" fill="url(#gg)"/></g><g transform="translate(720,4)"><path d="M1 0h4v5.5h6v4h-10z" fill="url(#gg)"/></g><g transform="translate(739,4)"><circle cx="3" cy="6" r="1.6" fill="#666"/><path d="M5 6h5" stroke="#aaa" stroke-width="1"/></g><g transform="translate(763,4)"><circle cx="6" cy="6" r="5.6" fill="#e6e4e1" stroke="#d2d0cd" stroke-width="0.8"/><path d="M1 7l10-3" stroke="#ccc" stroke-width="0.6"/></g><g transform="translate(784,4)"><path d="M0 2.5h10v9.5h-4v-5.5h-6z" fill="#e2e0dc"/></g><g transform="translate(805,4)"><path d="M0 1h9.5v11h-4v-6.5h-5.5z" fill="url(#gg)"/></g><g transform="translate(829,4)"><rect x="0.5" y="0.5" width="11" height="11" rx="4" fill="#f2f0ed" stroke="#dcdad7"/></g><g transform="translate(851,4)"><rect x="0.5" y="0.5" width="11" height="11" rx="4" fill="#e2e0dd" stroke="#d8d6d3"/></g><g transform="translate(873,4)"><path d="M3 3Q6 -1 9 3z" fill="#aaa"/><path d="M2 5l8 6M10 5l-8 6" stroke="#888" stroke-width="1.3"/><circle cx="6" cy="8" r="1.5" fill="#666"/></g><g transform="translate(894,4)"><rect x="5" y="0" width="2" height="12" fill="url(#ggv)"/><rect x="5" y="0" width="2" height="4" fill="#ddd"/></g><g transform="translate(917,4)"><rect x="0" y="5" width="12" height="1.6" fill="#999"/></g><g transform="translate(940,4)"><rect x="0" y="0" width="12" height="12" fill="none" stroke="#ccc" stroke-dasharray="1 1" stroke-width="0.6"/><path d="M2 6l4-4 5 4-5 5z" fill="url(#ggv)"/></g><g transform="translate(961,4)"><path d="M3 0h1v12h-1zM3 0h3M3 12h3" stroke="#ccc" stroke-width="0.7" fill="none"/></g><g transform="translate(983,4)"><rect x="0" y="0" width="12" height="12" fill="#e0e0e0" stroke="#aaa" stroke-width="0.6"/><path d="M2 7L4 3 6 7z" fill="none" stroke="#777" stroke-width="0.8"/><path d="M7 3h4M9 3v4" stroke="#555" stroke-width="1.2"/><path d="M2 9.5h8" stroke="#999" stroke-width="0.8"/></g><g transform="translate(1006,4)"><rect x="0" y="0" width="12" height="12" fill="#8c8c8c"/><path d="M1 6q1.5-4 3 0t3 0 3 0" stroke="#aaa" fill="none" stroke-width="0.8"/></g><g transform="translate(1028,4)"><circle cx="6" cy="4" r="3.2" fill="#8a8a8a"/><path d="M0 6l6 3 6-3v6l-6-3-6 3z" fill="url(#gg)"/></g><g transform="translate(1050,4)"><path d="M6 0l5 5-5 6-5-6z" fill="#efedea" stroke="#999" stroke-width="0.7"/><path d="M6 0v12M1 5h10" stroke="#aaa" stroke-width="0.5"/></g><g transform="translate(1072,4)"><circle cx="6" cy="6" r="1.6" fill="#888"/><circle cx="6" cy="2.5" r="1.5" fill="#ddd"/><circle cx="6" cy="9.5" r="1.5" fill="#ddd"/><circle cx="2.5" cy="6" r="1.5" fill="#ddd"/><circle cx="9.5" cy="6" r="1.5" fill="#ddd"/></g><g transform="translate(1094,4)"><rect x="0" y="0" width="12" height="12" rx="3.5" fill="url(#gg)" stroke="#888" stroke-width="0.6"/></g><g transform="translate(1116,4)"><rect x="0" y="0.5" width="12" height="11" rx="1.5" fill="url(#gg)"/></g><g transform="translate(1139,4)"><path d="M6 0l4.5 6-4.5 6-4.5-6z" fill="#efedea" stroke="#aaa" stroke-width="0.7"/></g><g transform="translate(1160,4)"><rect x="0" y="2" width="13" height="8" fill="#8a8a8a"/><text x="6.5" y="8.3" font-size="6" text-anchor="middle" fill="#ddd" font-family="Liberation Sans">Text</text></g></svg>
<div class="t" style="left:1143px;top:761px;height:14px;line-height:14px;">100%</div>
<div class="t" style="left:1174px;top:761px;height:14px;line-height:14px;">*</div>
<div class="t" style="left:1183px;top:761px;height:14px;line-height:14px;">Изм. размера</div>
<div class="t" style="left:1253px;top:761px;height:14px;line-height:14px;">.</div>
<div class="t" style="left:1260px;top:761px;height:14px;line-height:14px;"><span style="color:#f00000">root</span></div>
<div style="left:0px;top:776px;width:1280px;height:24px;background:linear-gradient(#f3f3f2,#e8e8e7);border-top:1px solid #d6d6d4;"></div>
<svg style="position:absolute;left:3px;top:779px" width="18" height="18"><path d="M2 2l14 14M16 2L2 16" stroke="#6cc0e8" stroke-width="4.5" stroke-linecap="round"/><path d="M2 2l14 14M16 2L2 16" stroke="#b8e4f8" stroke-width="1.5" stroke-linecap="round"/><path d="M2 10q1-4 6-4l3-2 1 2 3 1-1 3-3 1q-3 2-8 1z" fill="#000"/><path d="M1 7l3 2" stroke="#000" stroke-width="1"/></svg>
<div class="t" style="left:23px;top:781px;height:14px;line-height:14px;font-size:11.3px;color:#1a1a1a;">Меню приложений</div>
<svg style="position:absolute;left:128px;top:780px" width="16" height="16"><rect x="1" y="2" width="14" height="12" rx="4" fill="#b0b090" stroke="#6a6a50" stroke-width="0.8"/><rect x="0" y="1" width="3" height="3" fill="#5a7ab0"/><rect x="13" y="1" width="3" height="3" fill="#5a7ab0"/><rect x="0" y="12" width="3" height="3" fill="#5a7ab0"/><rect x="13" y="12" width="3" height="3" fill="#5a7ab0"/></svg>
<svg style="position:absolute;left:151px;top:779px" width="18" height="18"><rect x="0.5" y="0.5" width="10" height="17" fill="url(#door)" stroke="#666"/><defs><linearGradient id="door"><stop offset="0" stop-color="#888"/><stop offset="1" stop-color="#f4f4f4"/></linearGradient></defs><path d="M9 9l4-3.5v2h4v3h-4v2z" fill="#e01818" stroke="#a00" stroke-width="0.5"/></svg>
<div style="left:173px;top:784px;width:3px;height:1px;background:#c4beb8;"></div>
<div style="left:173px;top:787px;width:3px;height:1px;background:#c4beb8;"></div>
<div style="left:173px;top:790px;width:3px;height:1px;background:#c4beb8;"></div>
<div style="left:176px;top:777px;width:131px;height:23px;background:linear-gradient(#fafaf9,#e6e6e5);border:1px solid #c0c0be;border-bottom:none;border-radius:3px 3px 0 0;"></div>
<svg style="position:absolute;left:180px;top:781px" width="15" height="15"><circle cx="7.5" cy="7.5" r="7" fill="#4a80d0"/><circle cx="7.5" cy="7.5" r="5" fill="#a8c8f0"/><circle cx="7.5" cy="7.5" r="3" fill="#3a70c8"/><path d="M3 4l5 3.5" stroke="#fff" stroke-width="1"/></svg>
<div class="t" style="left:196px;top:781px;height:14px;line-height:14px;font-size:11.3px;color:#2a2a2a;">Известные пробле...</div>
<div style="left:307px;top:777px;width:130px;height:23px;background:linear-gradient(#fafaf9,#e6e6e5);border:1px solid #c0c0be;border-bottom:none;border-radius:3px 3px 0 0;"></div>
<div style="left:309px;top:784px;width:12px;height:9px;background:#fff;border:1px solid #e0e0e0;"></div>
<div class="t" style="left:327px;top:781px;height:14px;line-height:14px;font-size:11.3px;color:#2a2a2a;">*[Без имени]-1.0 (...</div>
<div style="left:437px;top:777px;width:130px;height:23px;background:linear-gradient(#fafaf9,#e6e6e5);border:1px solid #c0c0be;border-bottom:none;border-radius:3px 3px 0 0;"></div>
<svg style="position:absolute;left:440px;top:781px" width="15" height="15"><path d="M1 2h5l1 2h7v10H1z" fill="#8a9ab0" stroke="#667"/><rect x="1.5" y="5" width="12.5" height="9" fill="#6a9ad8" stroke="#3a6ab0" stroke-width="0.8"/></svg>
<div class="t" style="left:457px;top:781px;height:14px;line-height:14px;font-size:11.3px;color:#2a2a2a;">tmp</div>
<div style="left:567px;top:777px;width:131px;height:23px;background:linear-gradient(#fafaf9,#e6e6e5);border:1px solid #c0c0be;border-bottom:none;border-radius:3px 3px 0 0;"></div>
<svg style="position:absolute;left:571px;top:781px" width="15" height="15"><circle cx="7.5" cy="7.5" r="7" fill="#3a6ac8"/><rect x="2" y="3" width="7" height="4" fill="#1a2a1a"/><path d="M3 12l9-8" stroke="#d8c890" stroke-width="2"/><path d="M1 10q3 3 6 1" stroke="#d0d040" stroke-width="2" fill="none"/></svg>
<div class="t" style="left:587px;top:781px;height:14px;line-height:14px;font-size:11.3px;color:#2a2a2a;">OpenSCADA QTCfg:...</div>
<div style="left:698px;top:777px;width:130px;height:23px;background:linear-gradient(#fafaf9,#e6e6e5);border:1px solid #c0c0be;border-bottom:none;border-radius:3px 3px 0 0;"></div>
<svg style="position:absolute;left:702px;top:781px" width="15" height="15"><circle cx="7.5" cy="7.5" r="7" fill="#3a6ac8"/><rect x="2" y="3" width="7" height="4" fill="#1a2a1a"/><path d="M3 12l9-8" stroke="#d8c890" stroke-width="2"/><path d="M1 10q3 3 6 1" stroke="#d0d040" stroke-width="2" fill="none"/></svg>
<div class="t" style="left:718px;top:781px;height:14px;line-height:14px;font-size:11.3px;color:#2a2a2a;">OpenSCADA Vision-...</div>
<div style="left:828px;top:777px;width:130px;height:23px;background:linear-gradient(#fafaf9,#e6e6e5);border:1px solid #c0c0be;border-bottom:none;border-radius:3px 3px 0 0;"></div>
<svg style="position:absolute;left:832px;top:781px" width="15" height="15"><rect x="0.5" y="0.5" width="14" height="14" rx="3" fill="#8a9a8a" stroke="#667"/><rect x="2.5" y="2.5" width="10" height="10" fill="#9aa89a"/><path d="M4 6l2 1.5L4 9M7 10h3" stroke="#ddd" stroke-width="0.9" fill="none"/></svg>
<div class="t" style="left:848px;top:781px;height:14px;line-height:14px;font-size:11.3px;color:#2a2a2a;">[nixon@oscada-test...</div>
<div style="left:958px;top:777px;width:131px;height:23px;background:linear-gradient(#fafaf9,#e6e6e5);border:1px solid #c0c0be;border-bottom:none;border-radius:3px 3px 0 0;"></div>
<svg style="position:absolute;left:962px;top:781px" width="15" height="15"><rect x="0.5" y="0.5" width="14" height="14" rx="3" fill="#8a9a8a" stroke="#667"/><rect x="2.5" y="2.5" width="10" height="10" fill="#2a2a2a"/><path d="M4 6l2 1.5L4 9M7 10h3" stroke="#ddd" stroke-width="0.9" fill="none"/></svg>
<div class="t" style="left:978px;top:781px;height:14px;line-height:14px;font-size:11.3px;color:#2a2a2a;">skyadmin@sky: ~</div>
<div style="left:1091px;top:778px;width:34px;height:21px;background:#6aa0e0;border:1px solid #4a86d0;"></div>
<div style="left:1096px;top:781px;width:24px;height:15px;background:#b4d4fa;border:1px solid #e4f0ff;"></div>
<div style="left:1126px;top:778px;width:38px;height:21px;border:1px solid #c4c4c2;background:#efefee;"></div>
<svg style="position:absolute;left:1127px;top:779px" width="36" height="19"><path d="M3 3q3-3 6 0l5 5q2 3-1 5-2 1-4-1L4 8q-3-2-1-5z" fill="#ddd" stroke="#555" stroke-width="0.8"/><path d="M12 12l4 4" stroke="#555" stroke-width="1.5"/><path d="M26 2L35 17H17z" fill="#d81818" stroke="#a00" stroke-width="0.6"/><path d="M26 7v5M26 13.5v1.5" stroke="#fff" stroke-width="1.6"/></svg>
<div class="t" style="left:1169px;top:781px;height:14px;line-height:14px;font-size:11.3px;color:#2a2a2a;">nixon</div>
<div style="left:1203px;top:779px;width:46px;height:20px;border:1px solid #bcbcba;background:#f0f0ef;"></div>
<div class="t" style="left:1205px;top:781px;height:14px;line-height:14px;font-size:11.3px;color:#2a2a2a;">11:55:23</div>
<svg style="position:absolute;left:1251px;top:779px" width="29" height="20"><rect width="29" height="20" fill="#fff"/><rect y="0.00" width="29" height="1.54" fill="#c8202a"/><rect y="3.08" width="29" height="1.54" fill="#c8202a"/><rect y="6.16" width="29" height="1.54" fill="#c8202a"/><rect y="9.24" width="29" height="1.54" fill="#c8202a"/><rect y="12.32" width="29" height="1.54" fill="#c8202a"/><rect y="15.40" width="29" height="1.54" fill="#c8202a"/><rect y="18.48" width="29" height="1.54" fill="#c8202a"/><rect width="12" height="10.8" fill="#2a3c8a"/></svg>
<div style="left:216px;top:151px;width:848px;height:477px;background:#efebe7;border:1px solid #2a3444;border-top:none;"></div>
<div style="left:216px;top:151px;width:848px;height:17px;background:linear-gradient(#4a5464 0,#676f7f 2px,#3c4758 35%,#1c2636 60%,#1a2434);border-radius:4px 4px 0 0;"></div>
<svg style="position:absolute;left:220px;top:153px" width="14" height="14"><rect x="0.5" y="0.5" width="11" height="10.5" fill="#a8d0fa" stroke="#101820"/><rect x="1.8" y="1.8" width="5.5" height="2.4" fill="#0a3a0a"/><path d="M1 7.5h10" stroke="#d8e040" stroke-width="1.1"/><path d="M6 6.5l6 6" stroke="#aaa" stroke-width="2.2"/><circle cx="5.5" cy="6" r="1.4" fill="none" stroke="#ccc" stroke-width="1.2"/></svg>
<div class="t" style="left:216px;top:153px;height:13px;line-height:13px;width:830px;text-align:center;color:#fff;font-weight:bold;font-size:10.5px;">Библиотечный виджет: On_off_text_ind</div>
<svg style="position:absolute;left:1032px;top:154px" width="26" height="12"><path d="M6 10.5V3M2.5 6.5L6 3l3.5 3.5" stroke="#fff" stroke-width="1.8" fill="none"/><path d="M16 2.5l7 7M23 2.5l-7 7" stroke="#fff" stroke-width="1.8"/></svg>
<div style="left:220px;top:187px;width:839px;height:404px;background:#e9e5e0;border:1px solid #a9a19a;border-top-color:#b5ada6;"></div>
<div style="left:221px;top:188px;width:837px;height:1px;background:#faf9f7;"></div>
<div style="left:221px;top:173px;width:56px;height:14px;background:linear-gradient(#efece8,#dcd7d1);border:1px solid #aaa29a;border-bottom:none;border-radius:3px 3px 0 0;"></div>
<div class="t" style="left:221px;top:175px;height:12px;line-height:12px;width:56px;text-align:center;">Виджет</div>
<div style="left:276px;top:173px;width:67px;height:14px;background:linear-gradient(#efece8,#dcd7d1);border:1px solid #aaa29a;border-bottom:none;border-radius:3px 3px 0 0;"></div>
<div class="t" style="left:276px;top:175px;height:12px;line-height:12px;width:67px;text-align:center;">Атрибуты</div>
<div style="left:412px;top:173px;width:48px;height:14px;background:linear-gradient(#efece8,#dcd7d1);border:1px solid #aaa29a;border-bottom:none;border-radius:3px 3px 0 0;"></div>
<div class="t" style="left:412px;top:175px;height:12px;line-height:12px;width:48px;text-align:center;">Связи</div>
<div style="left:342px;top:171px;width:71px;height:17px;background:linear-gradient(#f6f4f2,#efebe7);border:1px solid #a9a19a;border-bottom:none;border-radius:3px 3px 0 0;"></div>
<div style="left:343px;top:171px;width:69px;height:2px;background:#5c8abc;border-radius:2px 2px 0 0;"></div>
<div style="left:343px;top:173px;width:69px;height:1px;background:#a8c0d8;"></div>
<div class="t" style="left:342px;top:173px;height:12px;line-height:12px;width:71px;text-align:center;">Обработка</div>
<div style="left:221px;top:386px;width:837px;height:1px;background:#a9a19a;"></div>
<div style="left:221px;top:387px;width:837px;height:1px;background:#faf9f7;"></div>
<div style="left:221px;top:388px;width:837px;height:4px;background:#efebe7;"></div>
<div style="left:221px;top:392px;width:837px;height:1px;background:#d3cec8;"></div>
<div style="left:625px;top:388px;width:1px;height:3px;background:#b8b2ab;"></div>
<div style="left:628px;top:388px;width:1px;height:3px;background:#b8b2ab;"></div>
<div style="left:631px;top:388px;width:1px;height:3px;background:#b8b2ab;"></div>
<div style="left:634px;top:388px;width:1px;height:3px;background:#b8b2ab;"></div>
<div style="left:637px;top:388px;width:1px;height:3px;background:#b8b2ab;"></div>
<div style="left:640px;top:388px;width:1px;height:3px;background:#b8b2ab;"></div>
<div style="left:643px;top:388px;width:1px;height:3px;background:#b8b2ab;"></div>
<div style="left:646px;top:388px;width:1px;height:3px;background:#b8b2ab;"></div>
<div style="left:649px;top:388px;width:1px;height:3px;background:#b8b2ab;"></div>
<div style="left:652px;top:388px;width:1px;height:3px;background:#b8b2ab;"></div>
<div style="left:230px;top:196px;width:819px;height:159px;background:#fff;border:1px solid #aaa39b;"></div>
<div style="left:231px;top:197px;width:805px;height:18px;background:linear-gradient(#f2efec,#e6e2dd);border-bottom:1px solid #bfb8b1;"></div>
<div style="left:315px;top:199px;width:1px;height:14px;background:#cdc7c0;"></div>
<div style="left:427px;top:199px;width:1px;height:14px;background:#cdc7c0;"></div>
<div style="left:503px;top:199px;width:1px;height:14px;background:#cdc7c0;"></div>
<div style="left:579px;top:199px;width:1px;height:14px;background:#cdc7c0;"></div>
<div style="left:656px;top:199px;width:1px;height:14px;background:#cdc7c0;"></div>
<div style="left:732px;top:199px;width:1px;height:14px;background:#cdc7c0;"></div>
<div class="t" style="left:234px;top:201px;height:12px;line-height:12px;width:80px;overflow:hidden;">Id</div>
<div class="t" style="left:319px;top:201px;height:12px;line-height:12px;width:107px;overflow:hidden;">Имя</div>
<div class="t" style="left:431px;top:201px;height:12px;line-height:12px;width:71px;overflow:hidden;">Тип данных</div>
<div class="t" style="left:507px;top:201px;height:12px;line-height:12px;width:71px;overflow:hidden;">Рабочая область</div>
<div class="t" style="left:583px;top:201px;height:12px;line-height:12px;width:72px;overflow:hidden;">Обраб.</div>
<div class="t" style="left:659px;top:201px;height:12px;line-height:12px;width:72px;overflow:hidden;">Конфигурация</div>
<div class="t" style="left:736px;top:201px;height:12px;line-height:12px;width:290px;overflow:hidden;">Конфигурационный шаблон</div>
<div style="left:256px;top:220px;width:7px;height:1px;background:repeating-linear-gradient(90deg,#8a8a8a 0 1px,transparent 1px 3px);"></div>
<div class="t" style="left:264px;top:214px;height:12px;line-height:12px;">tipStatus</div>
<div class="t" style="left:319px;top:214px;height:12px;line-height:12px;">Помощь:состояние</div>
<div class="t" style="left:431px;top:214px;height:12px;line-height:12px;">Строка</div>
<div style="left:508px;top:216px;width:2px;height:9px;background:linear-gradient(90deg,#444,#999);"></div>
<div class="t" style="left:659px;top:214px;height:12px;line-height:12px;">Нет</div>
<div style="left:231px;top:226px;width:805px;height:10px;background:#e8e6e2;"></div>
<div style="left:256px;top:231px;width:7px;height:1px;background:repeating-linear-gradient(90deg,#8a8a8a 0 1px,transparent 1px 3px);"></div>
<div class="t" style="left:264px;top:225px;height:12px;line-height:12px;">context...</div>
<div class="t" style="left:319px;top:225px;height:12px;line-height:12px;">Контекстное меню</div>
<div class="t" style="left:431px;top:225px;height:12px;line-height:12px;">Текст</div>
<div style="left:508px;top:227px;width:2px;height:9px;background:linear-gradient(90deg,#444,#999);"></div>
<div class="t" style="left:659px;top:225px;height:12px;line-height:12px;">Нет</div>
<div style="left:256px;top:241px;width:7px;height:1px;background:repeating-linear-gradient(90deg,#8a8a8a 0 1px,transparent 1px 3px);"></div>
<div class="t" style="left:264px;top:235px;height:12px;line-height:12px;">evProc</div>
<div class="t" style="left:319px;top:235px;height:12px;line-height:12px;">Обработка событий</div>
<div class="t" style="left:431px;top:235px;height:12px;line-height:12px;">Текст</div>
<div style="left:508px;top:237px;width:2px;height:9px;background:linear-gradient(90deg,#444,#999);"></div>
<div class="t" style="left:659px;top:235px;height:12px;line-height:12px;">Нет</div>
<div style="left:231px;top:247px;width:805px;height:11px;background:#e8e6e2;"></div>
<div style="left:256px;top:252px;width:7px;height:1px;background:repeating-linear-gradient(90deg,#8a8a8a 0 1px,transparent 1px 3px);"></div>
<div class="t" style="left:264px;top:246px;height:12px;line-height:12px;">pgOpen...</div>
<div class="t" style="left:319px;top:246px;height:12px;line-height:12px;">Страница:источник ...</div>
<div class="t" style="left:431px;top:246px;height:12px;line-height:12px;">Строка</div>
<div style="left:508px;top:248px;width:2px;height:9px;background:linear-gradient(90deg,#444,#999);"></div>
<div class="t" style="left:659px;top:246px;height:12px;line-height:12px;">Нет</div>
<div style="left:256px;top:263px;width:7px;height:1px;background:repeating-linear-gradient(90deg,#8a8a8a 0 1px,transparent 1px 3px);"></div>
<div class="t" style="left:264px;top:257px;height:12px;line-height:12px;">pgGrp</div>
<div class="t" style="left:319px;top:257px;height:12px;line-height:12px;">Страница:группа</div>
<div class="t" style="left:431px;top:257px;height:12px;line-height:12px;">Строка</div>
<div style="left:508px;top:259px;width:2px;height:9px;background:linear-gradient(90deg,#444,#999);"></div>
<div class="t" style="left:659px;top:257px;height:12px;line-height:12px;">Нет</div>
<div style="left:231px;top:268px;width:805px;height:11px;background:#e8e6e2;"></div>
<div style="left:256px;top:273px;width:7px;height:1px;background:repeating-linear-gradient(90deg,#8a8a8a 0 1px,transparent 1px 3px);"></div>
<div class="t" style="left:264px;top:267px;height:12px;line-height:12px;">backColor</div>
<div class="t" style="left:319px;top:267px;height:12px;line-height:12px;">Фон:цвет</div>
<div class="t" style="left:431px;top:267px;height:12px;line-height:12px;">Цвет</div>
<div style="left:508px;top:269px;width:2px;height:9px;background:linear-gradient(90deg,#444,#999);"></div>
<div class="t" style="left:659px;top:267px;height:12px;line-height:12px;">Нет</div>
<div style="left:256px;top:284px;width:7px;height:1px;background:repeating-linear-gradient(90deg,#8a8a8a 0 1px,transparent 1px 3px);"></div>
<div class="t" style="left:264px;top:278px;height:12px;line-height:12px;">backImg</div>
<div class="t" style="left:319px;top:278px;height:12px;line-height:12px;">Фон:изображение</div>
<div class="t" style="left:431px;top:278px;height:12px;line-height:12px;">Изображение</div>
<div style="left:508px;top:280px;width:2px;height:9px;background:linear-gradient(90deg,#444,#999);"></div>
<div class="t" style="left:659px;top:278px;height:12px;line-height:12px;">Нет</div>
<div style="left:231px;top:290px;width:805px;height:11px;background:#e8e6e2;"></div>
<div style="left:256px;top:295px;width:7px;height:1px;background:repeating-linear-gradient(90deg,#8a8a8a 0 1px,transparent 1px 3px);"></div>
<div class="t" style="left:264px;top:289px;height:12px;line-height:12px;">bordWidth</div>
<div class="t" style="left:319px;top:289px;height:12px;line-height:12px;">Граница:ширина</div>
<div class="t" style="left:431px;top:289px;height:12px;line-height:12px;">Целый</div>
<div style="left:508px;top:291px;width:2px;height:9px;background:linear-gradient(90deg,#444,#999);"></div>
<div class="t" style="left:659px;top:289px;height:12px;line-height:12px;">Нет</div>
<div style="left:256px;top:306px;width:7px;height:1px;background:repeating-linear-gradient(90deg,#8a8a8a 0 1px,transparent 1px 3px);"></div>
<div class="t" style="left:264px;top:300px;height:12px;line-height:12px;">bordColor</div>
<div class="t" style="left:319px;top:300px;height:12px;line-height:12px;">Граница:цвет</div>
<div class="t" style="left:431px;top:300px;height:12px;line-height:12px;">Цвет</div>
<div style="left:508px;top:302px;width:2px;height:9px;background:linear-gradient(90deg,#444,#999);"></div>
<div class="t" style="left:659px;top:300px;height:12px;line-height:12px;">Нет</div>
<div style="left:231px;top:311px;width:805px;height:11px;background:#e8e6e2;"></div>
<div style="left:256px;top:316px;width:7px;height:1px;background:repeating-linear-gradient(90deg,#8a8a8a 0 1px,transparent 1px 3px);"></div>
<div class="t" style="left:264px;top:310px;height:12px;line-height:12px;">bordStyle</div>
<div class="t" style="left:319px;top:310px;height:12px;line-height:12px;">Граница:стиль</div>
<div class="t" style="left:431px;top:310px;height:12px;line-height:12px;">Выбор целых</div>
<div class="t" style="left:507px;top:310px;height:12px;line-height:12px;">0;1;2;3;4;5;6;...</div>
<div class="t" style="left:659px;top:310px;height:12px;line-height:12px;">Нет</div>
<div style="left:256px;top:327px;width:7px;height:1px;background:repeating-linear-gradient(90deg,#8a8a8a 0 1px,transparent 1px 3px);"></div>
<div class="t" style="left:264px;top:321px;height:12px;line-height:12px;">Input_val</div>
<div class="t" style="left:319px;top:321px;height:12px;line-height:12px;">Вход. Величина</div>
<div class="t" style="left:431px;top:321px;height:12px;line-height:12px;">Логический</div>
<div style="left:508px;top:323px;width:2px;height:9px;background:linear-gradient(90deg,#444,#999);"></div>
<div class="t" style="left:659px;top:321px;height:12px;line-height:12px;">Входная связь</div>
<svg style="position:absolute;left:609px;top:320px" width="18" height="13"><path d="M1 6.5L6.5 12 17 1.5 6.5 8.5z" fill="#3cb83c" stroke="#2a9a2a" stroke-width="0.8" stroke-linejoin="round"/></svg>
<div style="left:231px;top:333px;width:805px;height:10px;background:#e8e6e2;"></div>
<div style="left:236px;top:335px;width:7px;height:7px;border:1px solid #9a9a9a;background:#fff;"></div>
<div style="left:238px;top:338px;width:3px;height:1px;background:#000;"></div>
<div style="left:239px;top:337px;width:1px;height:3px;background:#000;"></div>
<div style="left:244px;top:338px;width:4px;height:1px;background:repeating-linear-gradient(90deg,#8a8a8a 0 1px,transparent 1px 3px);"></div>
<div class="t" style="left:249px;top:332px;height:12px;line-height:12px;">Text1</div>
<div style="left:236px;top:345px;width:7px;height:7px;border:1px solid #9a9a9a;background:#fff;"></div>
<div style="left:238px;top:348px;width:3px;height:1px;background:#000;"></div>
<div style="left:239px;top:347px;width:1px;height:3px;background:#000;"></div>
<div style="left:244px;top:348px;width:4px;height:1px;background:repeating-linear-gradient(90deg,#8a8a8a 0 1px,transparent 1px 3px);"></div>
<div class="t" style="left:249px;top:342px;height:12px;line-height:12px;">rnd_sq_gr11</div>
<div style="left:239px;top:215px;width:1px;height:128px;background:repeating-linear-gradient(#8a8a8a 0 1px,transparent 1px 3px);"></div>
<div style="left:254px;top:215px;width:1px;height:112px;background:repeating-linear-gradient(#9a9a9a 0 1px,transparent 1px 3px);"></div>
<div style="left:1036px;top:197px;width:12px;height:157px;background:#d8d2cb;border-left:1px solid #c6bfb8;"></div>
<div style="left:1036px;top:197px;width:12px;height:12px;background:linear-gradient(#fdfcfb,#eae6e2);border:1px solid #aaa39b;border-radius:2px;"></div>
<svg style="position:absolute;left:1038px;top:200px" width="8" height="6"><path d="M0.5 5L4 1l3.5 4z" fill="#000"/></svg>
<div style="left:1036px;top:289px;width:12px;height:55px;background:linear-gradient(90deg,#fdfcfb,#efebe7);border:1px solid #b5aea6;border-radius:2px;"></div>
<div style="left:1039px;top:314px;width:6px;height:1px;background:#b5aea6;"></div>
<div style="left:1039px;top:316px;width:6px;height:1px;background:#b5aea6;"></div>
<div style="left:1039px;top:318px;width:6px;height:1px;background:#b5aea6;"></div>
<div style="left:1036px;top:343px;width:12px;height:12px;background:linear-gradient(#fdfcfb,#eae6e2);border:1px solid #aaa39b;border-radius:2px;"></div>
<svg style="position:absolute;left:1038px;top:346px" width="8" height="6"><path d="M0.5 1L4 5l3.5-4z" fill="#000"/></svg>
<div style="left:230px;top:360px;width:408px;height:18px;"></div>
<div class="btn" style="left:230px;top:360px;width:408px;height:18px;"></div>
<div class="t" style="left:230px;top:362px;height:13px;line-height:13px;width:408px;text-align:center;">Добавить атрибут</div>
<div class="btn" style="left:642px;top:360px;width:407px;height:18px;"></div>
<div class="t" style="left:642px;top:362px;height:13px;line-height:13px;width:407px;text-align:center;">Удалить атрибут</div>
<div class="t" style="left:230px;top:403px;height:13px;line-height:13px;">Язык процедуры:</div>
<div class="btn" style="left:319px;top:401px;width:291px;height:17px;"></div>
<div style="left:594px;top:403px;width:1px;height:13px;background:#d8d3cd;"></div>
<svg style="position:absolute;left:597px;top:403px" width="8" height="12"><path d="M0.5 5L4 1l3.5 4zM0.5 7L4 11l3.5-4z" fill="#000"/></svg>
<div class="t" style="left:323px;top:403px;height:13px;line-height:13px;">JavaLikeCalc.JavaScript</div>
<div class="t" style="left:614px;top:403px;height:13px;line-height:13px;">Вычисления процедуры (мс):</div>
<div style="left:760px;top:401px;width:289px;height:17px;background:#fff;border:1px solid #aaa39b;border-radius:2px;"></div>
<div class="t" style="left:764px;top:403px;height:13px;line-height:13px;">100</div>
<div style="left:230px;top:423px;width:819px;height:158px;background:#fff;border:1px solid #aaa39b;"></div>
<div class="t" style="left:235px;top:427.0px;height:12px;line-height:12px;"><b style="color:#0a0a8a">using</b> Special.FLibSYS<span style="color:#2828ff">;</span></div>
<div class="t" style="left:235px;top:437.5px;height:12px;line-height:12px;">Text1_text<b style="color:#4848b8">=</b><span style="color:#2828ff">(</span>Input_val<span style="color:#2828ff">)</span><b style="color:#10106a">?</b><span style="color:#108a10">"ВКЛ"</span><b style="color:#10106a">:</b><span style="color:#108a10">"ВЫКЛ"</span><span style="color:#2828ff">;</span></div>
<div class="t" style="left:235px;top:448.0px;height:12px;line-height:12px;">Text1_backColor<b style="color:#4848b8">=</b><span style="color:#2828ff">(</span>Input_val<span style="color:#2828ff">)</span><b style="color:#10106a">?</b><span style="color:#108a10">"red"</span><b style="color:#10106a">:</b><span style="color:#108a10">"grey"</span><span style="color:#2828ff">;</span></div>
<div class="t" style="left:235px;top:458.5px;height:12px;line-height:12px;">rnd_sq_gr11_fillColor<b style="color:#4848b8">=</b><span style="color:#2828ff">(</span>Input_val<span style="color:#2828ff">)</span><b style="color:#10106a">?</b><span style="color:#108a10">"red"</span><b style="color:#10106a">:</b><span style="color:#108a10">"grey"</span><span style="color:#2828ff">;</span></div>
<div class="btn" style="left:989px;top:596px;width:70px;height:24px;"></div>
<svg style="position:absolute;left:995px;top:601px" width="15" height="14"><path d="M2.5 2.5l10 9M12.5 2.5l-10 9" stroke="#7a827a" stroke-width="3.2" stroke-linecap="round"/></svg>
<div class="t" style="left:1013px;top:602px;height:13px;line-height:13px;"><span class="u">З</span>акрыть</div>
</body></html>
